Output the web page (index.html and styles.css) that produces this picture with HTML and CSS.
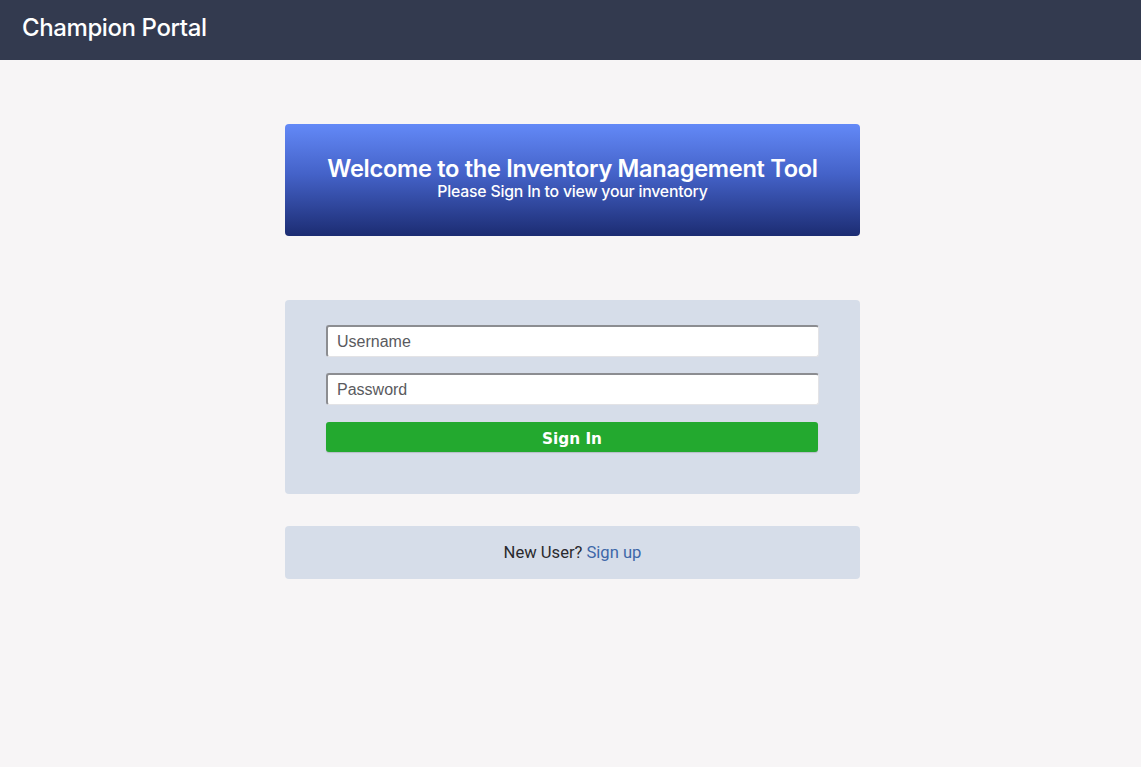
FILE: index.html
```html
<!DOCTYPE html>
<html>
<head>
<meta charset="utf-8">
<link rel="stylesheet" href="styles.css">
</head>
<body>
<header class="topbar">
  <span class="brand">Champion Portal</span>
</header>
<main class="content">
  <section class="banner">
    <h1 class="banner-title">Welcome to the Inventory Management Tool</h1>
    <p class="banner-sub">Please Sign In to view your inventory</p>
  </section>
  <form class="login-box">
    <input class="field" type="text" placeholder="Username">
    <input class="field" type="password" placeholder="Password">
    <button class="signin" type="button">Sign In</button>
  </form>
  <section class="signup-box">
    <span class="signup-text">New User?</span> <a class="signup-link" href="#">Sign up</a>
  </section>
</main>
</body>
</html>
```
FILE: styles.css
```css
html, body {
  margin: 0;
  padding: 0;
}
body {
  background: #f7f5f6;
  font-family: "Liberation Sans", Arial, sans-serif;
  min-height: 767px;
}
.topbar {
  height: 60px;
  background: #333a4f;
  display: flex;
  align-items: center;
  padding-left: 22px;
  box-sizing: border-box;
}
.brand {
  color: #ffffff;
  font-family: Inter, "Noto Sans", sans-serif;
  font-size: 24px;
  font-weight: 500;
  letter-spacing: -0.4px;
  position: relative;
  top: -3px;
}
.content {
  width: 575px;
  margin: 0 auto;
  padding: 64px 0 0 4px;
  display: flex;
  flex-direction: column;
}
.banner {
  height: 112px;
  border-radius: 4px;
  background: linear-gradient(to bottom, #6389f7 0%, #4462c8 45%, #1c2c72 100%);
  color: #ffffff;
  display: flex;
  flex-direction: column;
  align-items: center;
  justify-content: center;
  font-family: Inter, "Noto Sans", sans-serif;
  padding-bottom: 4px;
  box-sizing: border-box;
}
.banner-title {
  margin: 0;
  font-size: 23.6px;
  font-weight: 600;
  letter-spacing: -0.3px;
  line-height: 28px;
}
.banner-sub {
  margin: 0;
  font-size: 15.8px;
  font-weight: 500;
  letter-spacing: -0.2px;
  line-height: 18px;
}
.login-box {
  margin: 64px 0 0 0;
  height: 194px;
  background: #d6dde9;
  border-radius: 4px;
  padding: 25px 41px 0 41px;
  box-sizing: border-box;
  display: flex;
  flex-direction: column;
}
.field {
  height: 32px;
  box-sizing: border-box;
  border: 1px solid #e3e3e6;
  border-top: 2px solid #8c8d91;
  border-left: 2px solid #8c8d91;
  border-radius: 3px;
  background: #ffffff;
  padding: 0 9px;
  font-family: "Liberation Sans", Arial, sans-serif;
  font-size: 16px;
  color: #555;
  margin: 0 0 16px 0;
  outline: none;
}
.field::placeholder {
  color: #5a5a5e;
}
.signin {
  height: 30px;
  margin-top: 1px;
  width: 492px;
  border: none;
  border-radius: 3px;
  background: #23a92f;
  box-shadow: 0 1px 1px rgba(0,0,0,0.15);
  color: #ffffff;
  font-family: "DejaVu Sans", Verdana, sans-serif;
  font-weight: bold;
  font-size: 15.3px;
  padding: 3px 0 0 0;
}
.signup-box {
  margin-top: 32px;
  height: 53px;
  background: #d6dde9;
  border-radius: 4px;
  display: flex;
  align-items: center;
  justify-content: center;
  gap: 4px;
  font-family: Roboto, "Liberation Sans", sans-serif;
  font-size: 16.6px;
}
.signup-text {
  color: #2a2a2e;
}
.signup-link {
  color: #3d67a8;
  text-decoration: none;
}
```
